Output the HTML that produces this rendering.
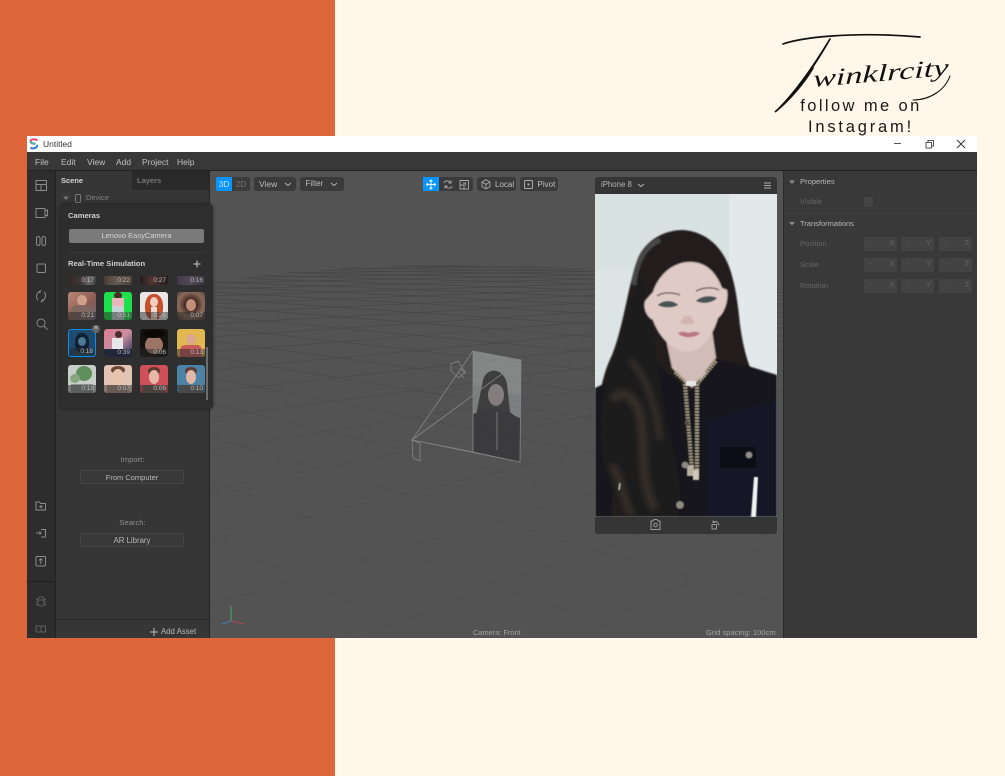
<!DOCTYPE html>
<html lang="en"><head><meta charset="utf-8"><title>Twinklrcity</title>
<style>
html,body{margin:0;padding:0;width:1005px;height:776px;overflow:hidden}
body{position:relative;background:#fff8ea;font-family:"Liberation Sans",sans-serif}
.a{position:absolute}
.tx{position:absolute;white-space:nowrap;font-size:8.5px;line-height:10px;color:#b5b5b5}
.win{position:absolute;left:27px;top:136px;width:950px;height:502px;overflow:hidden;filter:blur(.3px)}
.in{position:absolute;left:-27px;top:-136px;width:1005px;height:776px}
.btn{position:absolute;background:#3a3a3a;border-radius:3px}
.inp{position:absolute;width:33px;height:14px;background:#434343;color:#666;font-size:7px;line-height:14px}
.inp i{position:absolute;left:6px;font-style:normal}.inp b{position:absolute;right:3px;font-weight:400}
.t{position:absolute;width:28px;height:28px;border-radius:3px;overflow:hidden}
.t u{position:absolute;display:block}
.t s{position:absolute;left:0;right:0;bottom:0;height:8px;background:rgba(40,40,40,.5);color:#bbb;font-size:6.5px;line-height:8px;text-align:right;text-decoration:none;padding-right:2px;box-sizing:border-box}
</style></head><body>
<div class="a" style="left:0;top:0;width:335px;height:776px;background:#dd673b"></div>

<!-- signature -->
<svg class="a" style="left:760px;top:20px;filter:blur(.25px)" width="220" height="100" viewBox="760 20 220 100" fill="none" stroke="#111" stroke-linecap="round">
<title>Twinklrcity</title>
<path d="M783 44C800 38 850 31 920 37" stroke-width="1.700"/>
<path d="M830 39C815 65 795 95 775 112C790 100 805 82 813 68" stroke-width="1.700"/>
<path d="M828 42C812 68 795 92 779 108" stroke-width="1.200"/>
<path d="M950 76C945 90 930 100 913 100" stroke-width="1.100"/>
<text transform="translate(813 87) rotate(-5) skewX(-6)" font-family="Liberation Serif,serif" font-style="italic" font-size="24" fill="#111" stroke="none" textLength="136" lengthAdjust="spacingAndGlyphs">winklrcity</text>
</svg>
<div class="a" style="left:761px;top:96px;width:200px;text-align:center;font-size:16.500px;line-height:20px;color:#1a1a1a;letter-spacing:2.400px;white-space:nowrap">follow me on</div>
<div class="a" style="left:761px;top:117px;width:200px;text-align:center;font-size:16.500px;line-height:20px;color:#1a1a1a;letter-spacing:2.800px;white-space:nowrap">Instagram!</div>

<div class="win"><div class="in">
<!-- title bar -->
<div class="a" style="left:27px;top:136px;width:950px;height:16px;background:#fff"></div>
<svg class="a" style="left:29px;top:138px" width="10" height="12" viewBox="0 0 10 12"><path d="M8.500 2.500C6 .5 1.500 1 1.500 3.500S5 5.500 6.500 6" stroke="#e8486f" stroke-width="2" fill="none"/><path d="M1.500 3.500C2 5.500 5 5.500 6.500 6" stroke="#35b6a8" stroke-width="2" fill="none"/><path d="M8 7C9 10 3 11.500 1.500 9.500" stroke="#2c7fd8" stroke-width="2" fill="none"/></svg>
<div class="tx" style="left:43px;top:139px;color:#333;font-size:8.500px">Untitled</div>
<svg class="a" style="left:890px;top:138px" width="80" height="12" fill="none" stroke="#555"><path d="M4 5.500H11"/><path d="M36 4.500h5.500v5.500H36zM38 4.500V2.500h5.500V8h-2"/><path d="M67 2l8 8M75 2l-8 8" stroke="#333"/></svg>
<!-- menu -->
<div class="a" style="left:27px;top:152px;width:950px;height:18px;background:#383838"></div>
<div class="tx" style="left:35px;top:156.500px;color:#c0c0c0">File</div>
<div class="tx" style="left:61px;top:156.500px;color:#c0c0c0">Edit</div>
<div class="tx" style="left:87px;top:156.500px;color:#c0c0c0">View</div>
<div class="tx" style="left:116px;top:156.500px;color:#c0c0c0">Add</div>
<div class="tx" style="left:142px;top:156.500px;color:#c0c0c0">Project</div>
<div class="tx" style="left:177px;top:156.500px;color:#c0c0c0">Help</div>
<div class="a" style="left:27px;top:170px;width:950px;height:1px;background:#222"></div>
<!-- rail -->
<div class="a" style="left:27px;top:171px;width:28px;height:467px;background:#2d2d2d"></div>
<div class="a" style="left:55px;top:171px;width:1px;height:467px;background:#222"></div>
<div class="a" style="left:27px;top:581px;width:28px;height:1px;background:#1f1f1f"></div>
<svg class="a" style="left:27px;top:171px" width="28" height="467" viewBox="27 171 28 467" fill="none" stroke="#8b8b8b" stroke-width="1">
<path d="M36 180.500h10.500v10H36zM36 184.500h10.500M41 184.500v6"/>
<path d="M36 208.500h9v9h-9zM45 211l2.500-1v6l-2.500-1"/>
<rect x="36.500" y="236.500" width="3.500" height="9" rx="1.700"/><rect x="42" y="236.500" width="3.500" height="9" rx="1.700"/>
<rect x="37" y="264" width="8.500" height="8.500" rx="1"/>
<path d="M38 300c-3-3-1-8 2-8.500M44 292c3 3 1 8-2 8.500M38.500 292l2-1-1 2M43.500 300.500l-2 1 1-2"/>
<circle cx="41" cy="323" r="4"/><path d="M44 326l3.500 3.500"/>
<path d="M36 502h3.500l1 1.500h5v6.500H36zM41 505v3.500M39.200 506.800h3.600"/>
<path d="M41 529.500h4.500v7.500H41M36 533h5M39.500 531.500L41 533l-1.500 1.500" />
<rect x="36" y="556.500" width="9.500" height="9.500" rx="1"/><path d="M40.800 564v-5M39 560.500l1.800-1.800 1.800 1.800"/>
<g stroke="#5e5e5e"><rect x="38" y="597" width="6" height="9" rx="2"/><path d="M36 599l2 1M36 602h2M36 605l2-1M46 599l-2 1M46 602h-2M46 605l-2-1M38 600h6"/>
<rect x="36" y="626" width="9.500" height="6"/><path d="M41 626v6"/></g>
</svg>
<!-- scene panel -->
<div class="a" style="left:56px;top:171px;width:153px;height:467px;background:#363636"></div>
<div class="a" style="left:132px;top:171px;width:77px;height:19px;background:#2a2a2a"></div>
<div class="tx" style="left:61px;top:176px;color:#d5d5d5;font-weight:700;font-size:7.500px">Scene</div>
<div class="tx" style="left:137px;top:176px;color:#777;font-weight:700;font-size:7.500px">Layers</div>
<svg class="a" style="left:62px;top:194px" width="24" height="10" fill="none" stroke="#777"><path d="M1 2.500h6L4 6z" fill="#777" stroke="none"/><rect x="13.500" y=".5" width="5" height="8" rx="1"/></svg>
<div class="tx" style="left:86px;top:193px;color:#7f7f7f;font-size:7.500px">Device</div>
<div class="tx" style="left:56px;top:455px;width:153px;text-align:center;color:#8d8d8d;font-size:7.600px">Import:</div>
<div class="a" style="left:80px;top:470px;width:104px;height:14px;border:1px solid #444;border-radius:2px;box-sizing:border-box;background:#383838;text-align:center;font-size:7.500px;line-height:13px;color:#b8b8b8">From Computer</div>
<div class="tx" style="left:56px;top:518px;width:153px;text-align:center;color:#8d8d8d;font-size:7.600px">Search:</div>
<div class="a" style="left:80px;top:533px;width:104px;height:14px;border:1px solid #444;border-radius:2px;box-sizing:border-box;background:#383838;text-align:center;font-size:7.800px;line-height:13px;color:#b8b8b8">AR Library</div>
<div class="a" style="left:56px;top:619px;width:153px;height:1px;background:#2a2a2a"></div>
<svg class="a" style="left:149px;top:627px" width="10" height="10" stroke="#bbb"><path d="M5 1v8M1 5h8"/></svg>
<div class="tx" style="left:161px;top:626.500px;color:#b8b8b8;font-size:7.800px">Add Asset</div>
<div class="a" style="left:209px;top:171px;width:1px;height:467px;background:#242424"></div>

<!-- viewport -->
<div class="a" style="left:210px;top:171px;width:573px;height:467px;background:#535353"></div>
<svg class="a" style="left:210px;top:171px" width="573" height="467" viewBox="210 171 573 467" fill="none">
<defs><clipPath id="floor"><path d="M210 283Q440 245 783 287V638H210Z"/></clipPath><clipPath id="mini"><path d="M473 351L521 360 520 462 473 452Z"/></clipPath>
<linearGradient id="fg" gradientUnits="userSpaceOnUse" x1="0" y1="262" x2="0" y2="638"><stop offset="0" stop-color="#fff" stop-opacity=".7"/><stop offset=".4" stop-color="#fff" stop-opacity=".4"/><stop offset="1" stop-color="#fff" stop-opacity=".08"/></linearGradient>
<mask id="fm" maskUnits="userSpaceOnUse" x="210" y="171" width="573" height="467"><rect x="210" y="171" width="573" height="467" fill="url(#fg)"/></mask></defs>
<g mask="url(#fm)"><g clip-path="url(#floor)" stroke="#3f3f3f" stroke-width=".7">
<path d="M-400 258L783 264M-400 258L783 267M-400 258L783 270M-400 258L783 274M-400 258L783 278M-400 258L783 283M-400 258L783 289M-400 258L783 296M-400 258L783 304M-400 258L783 313M-400 258L783 324M-400 258L783 337M-400 258L783 352M-400 258L783 370M-400 258L783 392M-400 258L783 418M-400 258L783 450M-400 258L783 490M-400 258L783 540M-400 258L783 605M-400 258L646 640M-400 258L434 640M-400 258L253 640M-400 258L80 640"/>
<path d="M1400 258L210 264M1400 258L210 267M1400 258L210 270M1400 258L210 274M1400 258L210 278M1400 258L210 283M1400 258L210 289M1400 258L210 296M1400 258L210 304M1400 258L210 313M1400 258L210 324M1400 258L210 337M1400 258L210 352M1400 258L210 370M1400 258L210 392M1400 258L210 418M1400 258L210 450M1400 258L210 490M1400 258L210 540M1400 258L210 605M1400 258L348 640M1400 258L561 640M1400 258L743 640M1400 258L917 640"/>
</g></g>
<!-- camera gizmo -->
<g opacity=".58">
<path d="M473 351L521 360 520 462 473 452Z" fill="#9a9f9f"/>
<g clip-path="url(#mini)"><path d="M473 351L521 360V395L473 385Z" fill="#a9aeae"/>
<path d="M476 415L483 380C487 366 504 368 507 384L510 412 520 420V462L473 452Z" fill="#333234"/>
<ellipse cx="496" cy="395" rx="8" ry="11" fill="#a89c9e"/><path d="M473 414L490 408 505 412 520 418V462L473 452Z" fill="#2b2a30"/>
<path d="M497 412V450" stroke="#74716c" stroke-width="1.500"/></g>
<g stroke="#aaa" stroke-width=".8"><path d="M412 440L473 351M412 440L521 360M412 440L520 462M412 440L473 452M473 351L521 360 520 462 473 452Z"/>
<path d="M412 440L420 443V461L413 458ZM451 364L458 361 465 372 459 378 451 371ZM460 368L466 374M458 372L464 378"/></g>
</g>
<!-- axes -->
<path d="M231 621V606" stroke="#3fae64"/><path d="M231 621L244 624" stroke="#b04a52"/><path d="M231 621L222 624" stroke="#4579b8"/>
</svg>
<div class="tx" style="left:473px;top:628px;color:#a5a5a5;font-size:7.400px">Camera: Front</div>
<div class="tx" style="left:706px;top:628px;color:#a5a5a5;font-size:7.600px">Grid spacing: 100cm</div>

<!-- toolbar -->
<div class="a" style="left:216px;top:177px;width:16px;height:14px;background:#0a94ff;border-radius:2px 0 0 2px;color:#bfe2ff;font-size:8.500px;line-height:14px;text-align:center">3D</div>
<div class="a" style="left:232px;top:177px;width:18px;height:14px;background:#3b3b3b;border-radius:0 2px 2px 0;color:#707070;font-size:8.500px;line-height:14px;text-align:center">2D</div>
<div class="btn" style="left:254px;top:177px;width:42px;height:14px"></div><div class="tx" style="left:259px;top:179px;color:#bcbcbc">View</div>
<div class="btn" style="left:300px;top:177px;width:44px;height:14px"></div><div class="tx" style="left:305.500px;top:179px;color:#bcbcbc;font-size:8px">Filter</div>
<div class="a" style="left:423px;top:177px;width:16px;height:14px;background:#0a94ff"></div>
<div class="btn" style="left:439px;top:177px;width:34px;height:14px;border-radius:0 3px 3px 0"></div>
<div class="btn" style="left:477px;top:177px;width:39px;height:14px"></div><div class="tx" style="left:495px;top:179.500px;color:#c0c0c0;font-size:8px">Local</div>
<div class="btn" style="left:520px;top:177px;width:38px;height:14px"></div><div class="tx" style="left:537.500px;top:179.500px;color:#c0c0c0;font-size:8px">Pivot</div>
<svg class="a" style="left:210px;top:171px" width="360" height="26" viewBox="210 171 360 26" fill="none" stroke="#aaa">
<path d="M285 183l3 2.500 3-2.500M331 183l3 2.500 3-2.500" stroke-width="1.100"/>
<path d="M431 180v9M426.500 184.500h9M429.500 181.500L431 180l1.500 1.500M429.500 187.500l1.500 1.500 1.500-1.500M428 183l-1.500 1.500L428 186M434 183l1.500 1.500L434 186" stroke="#e8f5ff"/>
<path d="M444 183c0-2 4-3 6-1l1 1M452 186c0 2-4 3-6 1l-1-1M451 180.500V183h-2.500M445 188.500V186h2.500" stroke-width=".9"/>
<path d="M460 180.500h8.500v8.500H460zM460 185h4v4M463 183h2.500v2.500" stroke-width=".9"/>
<path d="M486 179.700l4 2.300v4.600l-4 2.300-4-2.300V182zM482 182l4 2.300 4-2.300M486 184.300v4.600" stroke-width=".9"/>
<rect x="524.500" y="180.500" width="8" height="8" rx="1"/><rect x="527.500" y="183.500" width="2" height="2" fill="#aaa" stroke="none"/>
</svg>

<!-- popup -->
<div class="a" style="left:60px;top:204px;width:153px;height:205px;background:#2e2e2e;border-radius:4px;box-shadow:0 0 3px rgba(0,0,0,.5)"></div>
<svg class="a" style="left:55px;top:207px" width="6" height="12"><path d="M6 0L1 6l5 6z" fill="#2e2e2e"/></svg>
<div class="tx" style="left:68px;top:211px;color:#d0d0d0;font-weight:700;font-size:7.600px">Cameras</div>
<div class="a" style="left:69px;top:229px;width:135px;height:14px;background:#7a7a7a;border-radius:2px;text-align:center;color:#d5d5d5;font-size:7.500px;line-height:14px">Lenovo EasyCamera</div>
<div class="a" style="left:68px;top:252px;width:137px;height:1px;background:#383838"></div>
<div class="tx" style="left:68px;top:258.500px;color:#d0d0d0;font-weight:700;font-size:7.600px">Real-Time Simulation</div>
<svg class="a" style="left:193px;top:260px" width="8" height="8" stroke="#ccc"><path d="M4 .5v7M.5 4h7"/></svg>

<!-- thumbnails: cut row -->
<div class="t" style="left:68px;top:276px;height:9px;border-radius:0 0 3px 3px;background:linear-gradient(90deg,#3b2328,#5b4a4c 50%,#aaa 75%,#555)"><s style="height:9px;line-height:9px">0:17</s></div>
<div class="t" style="left:104px;top:276px;height:9px;border-radius:0 0 3px 3px;background:linear-gradient(90deg,#6b5140,#a08a78 40%,#7a5a48)"><s style="height:9px;line-height:9px">0:22</s></div>
<div class="t" style="left:140px;top:276px;height:9px;border-radius:0 0 3px 3px;background:linear-gradient(90deg,#1d1215,#7c3c36 40%,#211416)"><s style="height:9px;line-height:9px">0:27</s></div>
<div class="t" style="left:177px;top:276px;height:9px;border-radius:0 0 3px 3px;background:linear-gradient(90deg,#5d4a6a,#7f6a88,#4f3f58)"><s style="height:9px;line-height:9px">0:16</s></div>
<!-- row 1 -->
<div class="t" style="left:68px;top:292px;background:linear-gradient(135deg,#b98a78,#8a5a50 60%,#6a6a80)"><u style="left:9px;top:3px;width:10px;height:11px;border-radius:50%;background:#d0a08a"></u><u style="left:3px;top:13px;width:22px;height:15px;border-radius:40%;background:#7f6660"></u><s>0:21</s></div>
<div class="t" style="left:104px;top:292px;background:#1ee04a"><u style="left:10px;top:0;width:8px;height:7px;border-radius:50%;background:#4a2d2a"></u><u style="left:8px;top:6px;width:12px;height:8px;background:#e9b6bd"></u><u style="left:8px;top:14px;width:12px;height:14px;background:#c9d3d6"></u><s>0:51</s></div>
<div class="t" style="left:140px;top:292px;background:#e9e6e4"><u style="left:5px;top:2px;width:18px;height:26px;border-radius:45%;background:#c54e2c"></u><u style="left:10px;top:5px;width:8px;height:10px;border-radius:50%;background:#f0cfc0"></u><u style="left:11px;top:15px;width:6px;height:13px;background:#e9dcd5"></u><s>0:25</s></div>
<div class="t" style="left:177px;top:292px;background:#5f4038"><u style="left:0;top:0;width:28px;height:28px;background:radial-gradient(circle at 50% 45%,#4a2e28 30%,#8a6a5a 60%,#4a3430)"></u><u style="left:9px;top:7px;width:10px;height:12px;border-radius:50%;background:#c08e78"></u><s>0:07</s></div>
<!-- row 2 -->
<div class="t" style="left:68px;top:329px;box-sizing:border-box;border:1px solid #0a8fef;background:#1f4a6c"><u style="left:6px;top:3px;width:14px;height:20px;border-radius:45%;background:#0f2233"></u><u style="left:9px;top:7px;width:8px;height:9px;border-radius:50%;background:#4d7792"></u><s>0:18</s></div>
<div class="a" style="left:92px;top:325px;width:8px;height:8px;border-radius:50%;background:#666;color:#ddd;font-size:7px;line-height:8px;text-align:center">×</div>
<div class="t" style="left:104px;top:329px;background:linear-gradient(135deg,#e07a90,#c98ea0 50%,#1c2a55)"><u style="left:11px;top:2px;width:7px;height:7px;border-radius:50%;background:#4b2e2b"></u><u style="left:8px;top:9px;width:11px;height:12px;background:#e6e6ea"></u><u style="left:0;top:20px;width:28px;height:8px;background:#1a2548"></u><s>0:39</s></div>
<div class="t" style="left:140px;top:329px;background:#161210"><u style="left:5px;top:7px;width:18px;height:18px;border-radius:50%;background:#9c7464"></u><u style="left:3px;top:1px;width:22px;height:8px;border-radius:50%;background:#0b0908"></u><s>0:06</s></div>
<div class="t" style="left:177px;top:329px;background:#e2b950"><u style="left:9px;top:5px;width:10px;height:11px;border-radius:50%;background:#d8a78c"></u><u style="left:3px;top:16px;width:22px;height:12px;border-radius:5px 5px 0 0;background:#c95c5a"></u><s>0:13</s></div>
<!-- row 3 -->
<div class="t" style="left:68px;top:365px;background:#c7cdc8"><u style="left:8px;top:1px;width:16px;height:15px;border-radius:50%;background:#5f8f5a"></u><u style="left:2px;top:9px;width:10px;height:9px;border-radius:50%;background:#86a67e"></u><u style="left:3px;top:19px;width:22px;height:9px;background:#8e9490"></u><s>0:18</s></div>
<div class="t" style="left:104px;top:365px;background:#e2c4b4"><u style="left:7px;top:1px;width:14px;height:8px;border-radius:50%;background:#6b4636"></u><u style="left:8px;top:4px;width:12px;height:16px;border-radius:50%;background:#e8c3ae"></u><u style="left:3px;top:20px;width:22px;height:8px;background:#a88e80"></u><s>0:07</s></div>
<div class="t" style="left:140px;top:365px;background:#cf4f5a"><u style="left:8px;top:2px;width:12px;height:8px;border-radius:50%;background:#5c3b30"></u><u style="left:9px;top:5px;width:10px;height:14px;border-radius:50%;background:#e6b8a6"></u><u style="left:3px;top:20px;width:22px;height:8px;background:#6f5a55"></u><s>0:06</s></div>
<div class="t" style="left:177px;top:365px;background:#4b82a6"><u style="left:8px;top:2px;width:12px;height:8px;border-radius:50%;background:#5c3f34"></u><u style="left:9px;top:5px;width:10px;height:14px;border-radius:50%;background:#dfb7a6"></u><u style="left:3px;top:20px;width:22px;height:8px;background:#6d6a6a"></u><s>0:10</s></div>
<div class="a" style="left:206px;top:347px;width:2px;height:53px;background:#6e6e6e"></div>

<!-- phone panel -->
<div class="a" style="left:595px;top:177px;width:182px;height:357px;background:#353535;border-radius:3px"></div>
<div class="tx" style="left:601px;top:180px;color:#b5b5b5;font-size:7.800px">iPhone 8</div>
<svg class="a" style="left:636px;top:181px" width="142" height="10" fill="none" stroke="#b0b0b0"><path d="M2 3l3 2.500L8 3" stroke-width="1.100"/><path d="M128 2h7M128 4.500h7M128 7h7" stroke="#aaa"/></svg>
<svg class="a" style="left:595px;top:194px" width="182" height="323" viewBox="595 194 182 323">
<defs><filter id="b1" x="-5%" y="-5%" width="110%" height="110%"><feGaussianBlur stdDeviation=".9"/></filter><filter id="b2" x="-20%" y="-20%" width="140%" height="140%"><feGaussianBlur stdDeviation=".6"/></filter><filter id="b3" x="-30%" y="-30%" width="160%" height="160%"><feGaussianBlur stdDeviation="3"/></filter></defs>
<rect x="595" y="194" width="182" height="323" fill="#d9e2e3"/>
<rect x="729" y="194" width="48" height="180" fill="#e3e9ea"/>
<rect x="595" y="270" width="40" height="110" fill="#dde4e5"/>
<g filter="url(#b1)">
<!-- hair back -->
<path d="M683 230C662 230 645 242 638 258C628 285 624 325 612 355C602 375 598 400 597 425V517H700V372H752C746 358 743 345 740 325C738 305 736 290 732 276C726 252 710 232 683 230Z" fill="#221f1e"/>
<!-- jacket -->
<path d="M595 388L612 380V517H595Z" fill="#14131d"/>
<path d="M655 362L690 392 718 360 745 365 777 375V517H650Z" fill="#14131d"/>
<path d="M706 420L777 400V517H706Z" fill="#181727"/>
<path d="M720 447H756V468H720Z" fill="#0f0e15"/>
<!-- hair front left -->
<path d="M640 270C630 300 624 335 613 360C602 385 599 415 601 445C604 480 618 505 632 517H677C684 495 678 470 671 440C664 410 660 385 658 365L652 320Z" fill="#1f1b1a"/>
<path d="M660 240C645 246 636 262 634 285" stroke="#474747" stroke-width="5" fill="none"/>
<!-- neck -->
<path d="M664 330L712 330 716 358 692 388 672 368Z" fill="#d2bcb7"/>
<!-- face -->
<path d="M690 262C672 262 658 276 653 292L645 301C643 309 647 317 653 320C658 335 672 352 688 352C702 352 713 335 718 318C724 314 729 300 727 290L722 288C716 272 706 262 690 262Z" fill="#dfcac5"/>
</g>
<g filter="url(#b3)" fill="none" stroke="#41352f" opacity=".75">
<path d="M612 400C625 385 640 400 642 430C645 460 640 480 655 510" stroke-width="9"/>
<path d="M630 360C645 375 655 400 660 440" stroke-width="6"/>
<path d="M612 465C622 480 622 500 632 515" stroke-width="8"/>
</g>
<g filter="url(#b2)">
<path d="M657 296C663 292 672 292 680 295M696 291C704 287 713 287 719 290" stroke="#75625e" stroke-width="1.300" fill="none"/>
<path d="M658 305C663 300 673 300 678 305C672 308 664 308 658 305Z" fill="#4a5252"/>
<path d="M696 301C701 296 711 295 717 298C712 303 703 304 696 301Z" fill="#4a5252"/>
<path d="M684 316C683 320 680 321 680 323C684 325 692 325 695 323C695 321 692 320 691 316Z" fill="#d3b5af"/>
<path d="M678 333C683 331 686 332 688 333C692 332 696 331 700 333C696 338 683 339 678 333Z" fill="#bb7580"/>
</g>
<g filter="url(#b2)" fill="none">
<path d="M716 361L698 383" stroke="#b3a98c" stroke-width="4" stroke-dasharray="2 1"/>
<path d="M675 372L688 384" stroke="#b3a98c" stroke-width="4" stroke-dasharray="2 1"/>
<path d="M685 384L692 470" stroke="#a79e82" stroke-width="4.500" stroke-dasharray="2 1"/>
<path d="M697 384V477" stroke="#b0a78c" stroke-width="4.500" stroke-dasharray="2 1"/>
<rect x="686" y="381" width="10" height="5" fill="#e7e7ea"/>
<rect x="687" y="465" width="7" height="11" fill="#b8b0a0"/><rect x="693" y="470" width="6" height="10" fill="#cfc9b9"/>
<circle cx="680" cy="505" r="4" fill="#8e8a84"/><circle cx="749" cy="455" r="3.500" fill="#908d88"/><circle cx="685" cy="465" r="3.500" fill="#8a8782"/><circle cx="687" cy="423" r="2.500" fill="#55524e"/>
<path d="M754 477L751 517H756L758 477Z" fill="#f3f3f3"/><path d="M620 483L619 490" stroke="#ccc" stroke-width="1.500"/>
</g>
</svg>
<svg class="a" style="left:645px;top:518px" width="80" height="14" fill="none" stroke="#9a9a9a"><path d="M6 3h2l1-1.500h3L13 3h2v8.500H6z"/><circle cx="10.500" cy="7" r="1.800"/><path d="M67 6.500h4.500V11H67zM68 4.500c2-2 5-1 6 3M68 2.500v2h2" /></svg>

<!-- right panel -->
<div class="a" style="left:783px;top:171px;width:194px;height:467px;background:#393939;border-left:1px solid #2a2a2a;box-sizing:border-box"></div>
<svg class="a" style="left:788px;top:178px" width="10" height="50"><path d="M1 2.500h6L4 6zM1 44h6L4 47.500z" fill="#8a8a8a"/></svg>
<div class="tx" style="left:800px;top:177px;color:#b8b8b8;font-size:7.600px">Properties</div>
<div class="tx" style="left:800px;top:197px;color:#666;font-size:7.600px">Visible</div>
<div class="a" style="left:864px;top:197px;width:9px;height:10px;background:#444;border-radius:1px"></div>
<div class="a" style="left:784px;top:213px;width:193px;height:1px;background:#3f3f3f"></div>
<div class="tx" style="left:800px;top:218.500px;color:#b8b8b8;font-size:7.500px">Transformations</div>
<div class="tx" style="left:800px;top:239px;color:#666;font-size:7.500px">Position</div>
<div class="tx" style="left:800px;top:260px;color:#666;font-size:7.500px">Scale</div>
<div class="tx" style="left:800px;top:281px;color:#666;font-size:7.500px">Rotation</div>
<div class="inp" style="left:864px;top:237px"><i>-</i><b>X</b></div><div class="inp" style="left:901px;top:237px"><i>-</i><b>Y</b></div><div class="inp" style="left:939px;top:237px"><i>-</i><b>Z</b></div>
<div class="inp" style="left:864px;top:258px"><i>-</i><b>X</b></div><div class="inp" style="left:901px;top:258px"><i>-</i><b>Y</b></div><div class="inp" style="left:939px;top:258px"><i>-</i><b>Z</b></div>
<div class="inp" style="left:864px;top:279px"><i>-</i><b>X</b></div><div class="inp" style="left:901px;top:279px"><i>-</i><b>Y</b></div><div class="inp" style="left:939px;top:279px"><i>-</i><b>Z</b></div>
</div></div>
</body></html>
